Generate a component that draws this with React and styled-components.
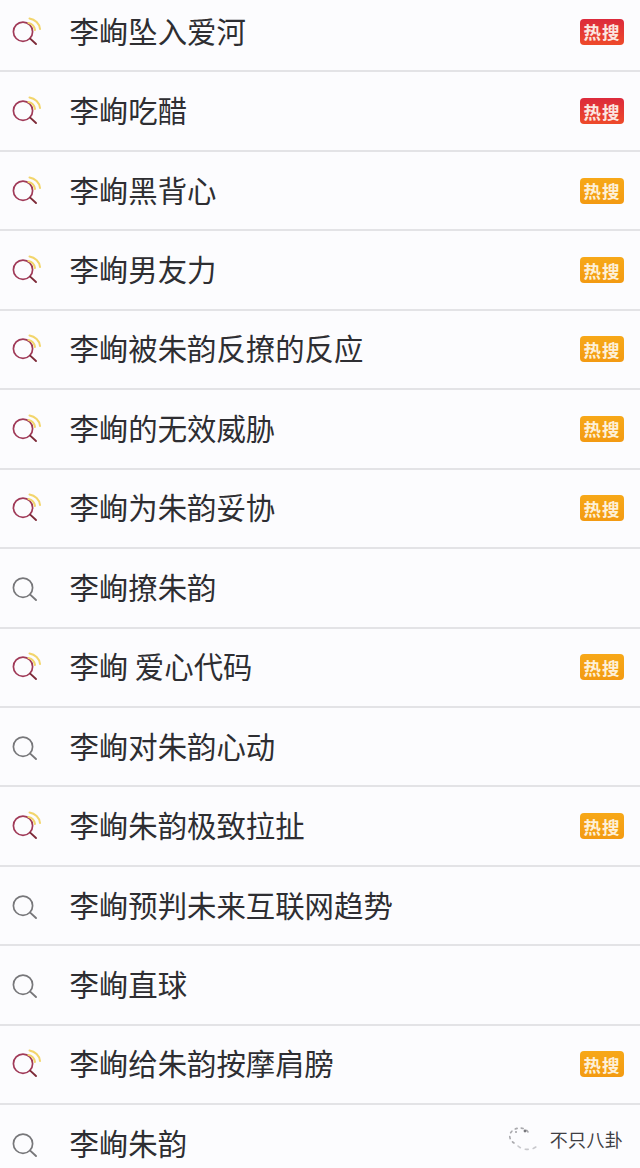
import React from 'react'
import styled, { createGlobalStyle } from 'styled-components'

const GlobalStyle = createGlobalStyle`
  html, body {
    margin: 0;
    padding: 0;
    background: #fcfcfe;
  }
`

const Page = styled.div`
  position: relative;
  width: 640px;
  height: 1168px;
  overflow: hidden;
  background: #fcfcfe;
  font-family: "Noto Sans CJK SC", "Noto Sans", sans-serif;
`

const List = styled.ul`
  list-style: none;
  margin: -7px 0 0;
  padding: 0;
`

const Row = styled.li`
  box-sizing: border-box;
  height: 79.45px;
  display: flex;
  align-items: center;
  padding: 0 16px 0 12px;
  border-bottom: 2px solid #e3e3e6;
`

const IconSlot = styled.svg`
  width: 28px;
  height: 30px;
  flex: none;
  margin-right: 29.5px;
  overflow: visible;
`

const Label = styled.span`
  flex: 1;
  font-size: 29.4px;
  line-height: 40px;
  padding-bottom: 4px;
  color: #2e2e32;
  white-space: pre;
`

const Badge = styled.span`
  width: 44px;
  height: 26px;
  flex: none;
  border-radius: 4px;
  display: flex;
  align-items: center;
  justify-content: center;
  font-size: 17.5px;
  font-weight: 700;
  letter-spacing: 1px;
  color: ${props => (props.$hot ? '#fbe6e0' : '#fdf0d8')};
  background: ${props =>
    props.$hot
      ? 'linear-gradient(180deg, #dc2a3c 0%, #ee4a2a 100%)'
      : 'linear-gradient(180deg, #f7a818 0%, #f39a12 100%)'};
`

const Watermark = styled.div`
  position: absolute;
  right: 17px;
  bottom: 14px;
  display: flex;
  align-items: center;
  gap: 10px;
  color: #3f3f44;
  font-size: 18px;
  letter-spacing: 0.3px;
  padding: 2px 0 2px 14px;
`

const rows = [
  { text: '李峋坠入爱河', badge: 'hot' },
  { text: '李峋吃醋', badge: 'hot' },
  { text: '李峋黑背心', badge: 'warm' },
  { text: '李峋男友力', badge: 'warm' },
  { text: '李峋被朱韵反撩的反应', badge: 'warm' },
  { text: '李峋的无效威胁', badge: 'warm' },
  { text: '李峋为朱韵妥协', badge: 'warm' },
  { text: '李峋撩朱韵' },
  { text: '李峋 爱心代码', badge: 'warm' },
  { text: '李峋对朱韵心动' },
  { text: '李峋朱韵极致拉扯', badge: 'warm' },
  { text: '李峋预判未来互联网趋势' },
  { text: '李峋直球' },
  { text: '李峋给朱韵按摩肩膀', badge: 'warm' },
  { text: '李峋朱韵' },
]

const SearchIcon = ({ trending }) => (
  <IconSlot viewBox="0 0 28 30" fill="none" strokeLinecap="round">
    <circle
      cx="11"
      cy="14.7"
      r="9.6"
      stroke={trending ? '#a03a58' : '#77777a'}
      strokeWidth="1.7"
    />
    <path
      d="M18.2 21.6 L24 27"
      stroke={trending ? '#7d2a38' : '#77777a'}
      strokeWidth="1.9"
    />
    {trending && (
      <g stroke="#f2d56c" strokeWidth="2">
        <path d="M16.5 6 C20 6.8 22.5 9.5 23 13" />
        <path d="M17.5 1.5 C23 2.5 27.5 6.5 28 12" />
      </g>
    )}
  </IconSlot>
)

const WeChatMark = () => (
  <svg width="32" height="26" viewBox="0 0 32 26" fill="none">
    <path
      d="M20 6 C16 0 5 1 2 8 C1 12 3 15 6 17"
      stroke="#a9a9ad"
      strokeWidth="1.6"
      strokeDasharray="2 4"
      strokeLinecap="round"
    />
    <path
      d="M10 20 C14 24 24 25 29 20"
      stroke="#c8c8cc"
      strokeWidth="1.6"
      strokeDasharray="3 5"
      strokeLinecap="round"
    />
    <circle cx="17" cy="5" r="1.4" fill="#77777c" />
    <circle cx="8" cy="6" r="1" fill="#a0a0a5" />
  </svg>
)

export default function App() {
  return (
    <Page>
      <GlobalStyle />
      <List>
        {rows.map(row => (
          <Row key={row.text}>
            <SearchIcon trending={Boolean(row.badge)} />
            <Label>{row.text}</Label>
            {row.badge && <Badge $hot={row.badge === 'hot'}>热搜</Badge>}
          </Row>
        ))}
      </List>
      <Watermark>
        <WeChatMark />
        <span>不只八卦</span>
      </Watermark>
    </Page>
  )
}
